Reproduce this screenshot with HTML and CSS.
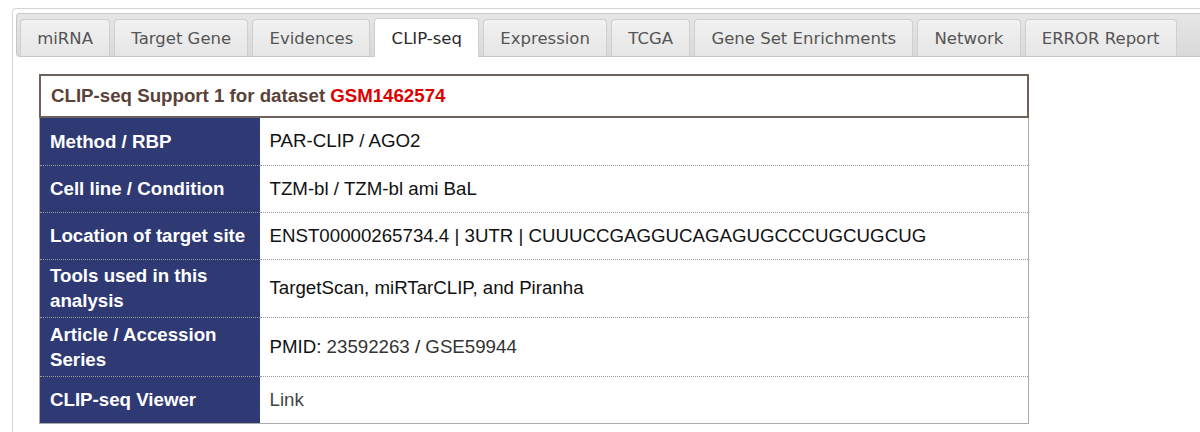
FILE: index.html
```html
<!DOCTYPE html>
<html>
<head>
<meta charset="utf-8">
<link rel="stylesheet" href="styles.css">
</head>
<body>
<div class="tabs">
  <ul class="nav">
    <li class="tab">miRNA</li>
    <li class="tab">Target Gene</li>
    <li class="tab">Evidences</li>
    <li class="tab active">CLIP-seq</li>
    <li class="tab">Expression</li>
    <li class="tab">TCGA</li>
    <li class="tab">Gene Set Enrichments</li>
    <li class="tab">Network</li>
    <li class="tab">ERROR Report</li>
  </ul>
  <div class="panel">
    <div class="card">
      <div class="title">CLIP-seq Support 1 for dataset <span class="gsm">GSM1462574</span></div>
      <table class="info">
        <tr><th>Method / RBP</th><td>PAR-CLIP / AGO2</td></tr>
        <tr><th>Cell line / Condition</th><td>TZM-bl / TZM-bl ami BaL</td></tr>
        <tr><th>Location of target site</th><td>ENST00000265734.4 | 3UTR | CUUUCCGAGGUCAGAGUGCCCUGCUGCUG</td></tr>
        <tr class="tall"><th>Tools used in this analysis</th><td>TargetScan, miRTarCLIP, and Piranha</td></tr>
        <tr class="tall2"><th>Article / Accession Series</th><td>PMID: <span class="lnk">23592263</span> / <span class="lnk">GSE59944</span></td></tr>
        <tr><th>CLIP-seq Viewer</th><td><span class="lnk2">Link</span></td></tr>
      </table>
    </div>
  </div>
</div>
</body>
</html>
```
FILE: styles.css
```css
html, body { margin: 0; padding: 0; background: #fff; }
body { font-family: "Liberation Sans", Arial, sans-serif; }
.tabs {
  margin: 8px 0 0 12px;
  border: 1px solid #d6d6d6;
  border-right: none;
  border-bottom: none;
  border-radius: 4px 0 0 0;
  padding: 4px 0 0 3px;
  height: 440px;
}
.nav {
  list-style: none;
  margin: 0;
  padding: 4px 0 0 3px;
  display: flex;
  gap: 4px;
  height: 38px;
  background: linear-gradient(#e6e6e6, #d9d9d9);
  border: 1px solid #c8c8c8;
  border-right: none;
  border-radius: 4px 0 0 4px;
}
.tab {
  height: 37px;
  box-sizing: border-box;
  padding: 0 16.2px;
  display: flex;
  align-items: center;
  font-family: "DejaVu Sans", Verdana, sans-serif;
  font-size: 16.5px;
  color: #555;
  background: linear-gradient(#f1f1f1, #e6e6e6);
  border: 1px solid #cfcfcf;
  border-bottom: none;
  border-radius: 4px 4px 0 0;
  margin-top: 1px;
  white-space: nowrap;
}
.tab.active {
  background: #fff;
  color: #2b2b2b;
  height: 39px;
  margin-top: 0;
  margin-bottom: -1px;
  position: relative;
}
.panel { padding: 17px 0 0 23px; }
.card { width: 990px; }
.title {
  border: 2px solid #6f625c;
  height: 44px;
  box-sizing: border-box;
  padding: 0 10px;
  display: flex;
  align-items: center;
  font-weight: bold;
  font-size: 18.7px;
  color: #5a4238;
}
.gsm { color: #dd0000; margin-left: 5px; }
.info {
  width: 100%;
  border-collapse: collapse;
  border: 1px solid #aaa;
  border-top: none;
}
.info th, .info td {
  height: 47px;
  box-sizing: border-box;
  padding: 0 10px;
  font-size: 18.7px;
  text-align: left;
  border-bottom: 1px dotted #999;
}
.info tr:last-child th, .info tr:last-child td { border-bottom: 1px solid #aaa; }
.info tr.tall th, .info tr.tall td { height: 58px; }
.info tr.tall2 th, .info tr.tall2 td { height: 59px; }
.info th {
  width: 220px;
  background: #2f3a75;
  color: #fff;
  font-weight: bold;
  line-height: 25px;
}
.info td { color: #111; }
.lnk { color: #333; }
.lnk2 { color: #444; }
```
